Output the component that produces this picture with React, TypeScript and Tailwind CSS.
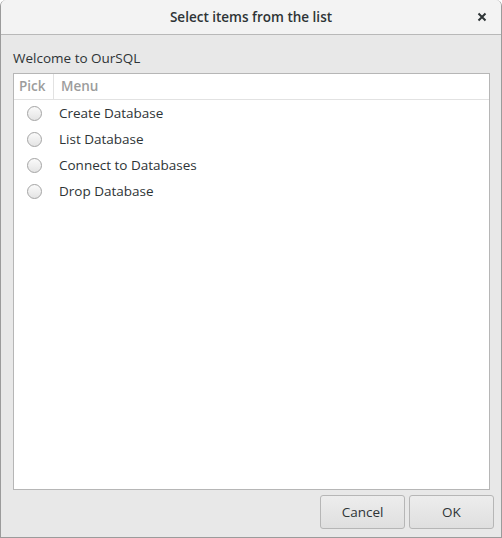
import React, { useState } from 'react';

const items = ['Create Database', 'List Database', 'Connect to Databases', 'Drop Database'];

export default function App() {
  const [picked, setPicked] = useState<number | null>(null);

  return (
    <div
      className="w-[502px] h-[538px] bg-[#e8e8e8] flex flex-col border-x border-b border-[#9b9b9b] rounded-t-[6px] overflow-hidden text-[#2e3436]"
      style={{ fontFamily: '"Open Sans", "Noto Sans", sans-serif' }}
    >
      <div className="h-[35px] shrink-0 bg-[#f3f3f3] border-b border-[#b8b8b8] flex items-center justify-center relative">
        <span className="text-[13.5px] font-semibold text-[#2e3436]">Select items from the list</span>
        <button className="absolute right-[12px] top-[10px] w-[14px] h-[14px] flex items-center justify-center">
          <svg width="10" height="10" viewBox="0 0 10 10">
            <path d="M1.5 1.5 L8.5 8.5 M8.5 1.5 L1.5 8.5" stroke="#2e3436" strokeWidth="2" />
          </svg>
        </button>
      </div>

      <div className="flex-1 flex flex-col pl-[12px] pr-[7px] pt-[13px] pb-[8px]">
        <div className="text-[13.5px] leading-[20px] mb-[5px] text-[#2e3436]">Welcome to OurSQL</div>
        <div className="flex-1 bg-white border border-[#b6b6b6] flex flex-col mr-[4px]">
          <div className="h-[26px] flex items-center border-b border-[#e2e2e2] text-[13.5px] font-semibold text-[#9c9c9c]">
            <div className="w-[40px] h-full flex items-center pl-[5px] border-r border-[#e2e2e2]">Pick</div>
            <div className="pl-[7px]">Menu</div>
          </div>
          {items.map((label, i) => (
            <div
              key={label}
              className="h-[26px] flex items-center text-[13.5px] text-[#2e3436] cursor-default"
              onClick={() => setPicked(i)}
            >
              <div className="w-[40px] flex justify-center">
                <span className="w-[15px] h-[15px] rounded-full border border-[#a4a4a4] bg-gradient-to-b from-[#fafafa] to-[#e4e4e4] flex items-center justify-center ml-[1px]">
                  {picked === i && <span className="w-[5px] h-[5px] rounded-full bg-[#2e3436]" />}
                </span>
              </div>
              <div className="pl-[5px]">{label}</div>
            </div>
          ))}
        </div>
        <div className="flex justify-end gap-[4px] mt-[5px]">
          <button className="w-[85px] h-[34px] rounded-[3px] border border-[#b6b6b6] bg-gradient-to-b from-[#ededed] to-[#dfdfdf] text-[13.5px] text-[#2e3436]">
            Cancel
          </button>
          <button className="w-[85px] h-[34px] rounded-[3px] border border-[#b6b6b6] bg-gradient-to-b from-[#ededed] to-[#dfdfdf] text-[13.5px] text-[#2e3436]">
            OK
          </button>
        </div>
      </div>
    </div>
  );
}
